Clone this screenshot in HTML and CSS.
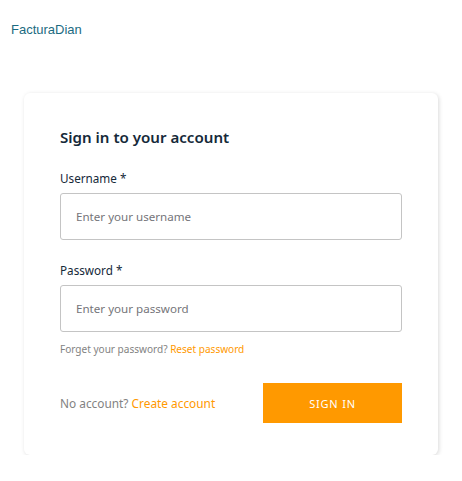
FILE: index.html
```html
<!DOCTYPE html>
<html>
<head>
<meta charset="utf-8">
<link rel="stylesheet" href="styles.css">
</head>
<body>
<div class="brand">FacturaDian</div>
<div class="card">
  <div class="title">Sign in to your account</div>
  <div class="field">
    <label class="label">Username *</label>
    <input class="input" type="text" placeholder="Enter your username">
  </div>
  <div class="field">
    <label class="label">Password *</label>
    <input class="input" type="password" placeholder="Enter your password">
    <div class="hint">Forget your password? <a class="link">Reset password</a></div>
  </div>
  <div class="footer">
    <span class="muted">No account? <a class="link">Create account</a></span>
    <button class="btn">SIGN IN</button>
  </div>
</div>
</body>
</html>
```
FILE: styles.css
```css
html, body { margin: 0; padding: 0; background: #fff; }
body { font-family: "Noto Sans", "Open Sans", sans-serif; }
.brand {
  font-family: "Liberation Sans", Arial, sans-serif;
  font-size: 13px;
  color: #1c6b82;
  padding: 22px 0 0 11px;
  line-height: 16px;
}
.card {
  margin: 55px 0 0 24px;
  width: 414px;
  box-sizing: border-box;
  padding: 33px 36px 32px;
  border-radius: 6px;
  box-shadow: 1px 1px 4px rgba(0,0,0,0.15);
  background: #fff;
}
.title {
  font-size: 15.1px;
  font-weight: 600;
  color: #152939;
  line-height: 22px;
  margin-bottom: 22px;
}
.field { margin-bottom: 22px; }
.label {
  display: block;
  font-size: 11.7px;
  color: #152939;
  line-height: 17px;
  margin-bottom: 6px;
}
.input {
  display: block;
  width: 100%;
  box-sizing: border-box;
  height: 47px;
  border: 1px solid #c4c4c4;
  border-radius: 3px;
  padding: 0 15px;
  font-family: inherit;
  font-size: 11.6px;
  color: #152939;
  outline: none;
}
.input::placeholder { color: #75757a; }
.hint {
  font-size: 10.05px;
  color: #828282;
  margin-top: 10px;
  line-height: 14px;
}
.link { color: #ff9900; text-decoration: none; }
.footer {
  display: flex;
  justify-content: space-between;
  align-items: center;
  margin-top: 27px;
}
.muted { font-size: 11.85px; color: #828282; }
.btn {
  width: 139px;
  height: 40px;
  border: none;
  background: #ff9900;
  color: #fff;
  font-family: inherit;
  font-size: 11px;
  letter-spacing: 0.8px;
  padding: 0;
}
```
